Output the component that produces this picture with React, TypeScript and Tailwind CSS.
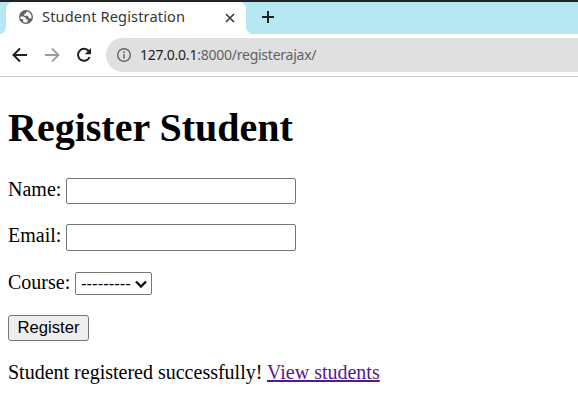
import React from "react";

function Tab() {
  return (
    <div className="flex h-8 w-[240px] shrink-0 items-center rounded-t-[7px] bg-white pl-[13px]">
      <svg className="-mt-0.5 h-[14px] w-[14px] shrink-0" viewBox="0 0 14 14">
        <circle cx="7" cy="7" r="7" fill="#5f6368" />
        <path d="M8.2 1.5 6.8 2.7v1.1H5.2v2h3.3l1.2 1.3v1.1h2.8A5.8 5.8 0 0 0 8.2 1.5z" fill="#fff" />
        <path d="M1.3 6.6h3.4l2.1 1.5v1.5h2v1.6l-1.5 1.5A5.7 5.7 0 0 1 3.6 11.6l1-1.2-1.2-1.5H1.7z" fill="#fff" />
      </svg>
      <span className="-mt-1 ml-[9px] block w-[144px] shrink-0 whitespace-nowrap text-[14.6px] leading-5 tracking-[0.12px] text-[#35363a]">Student Registration</span>
      <svg className="-mt-px ml-[39px] h-[10px] w-[10px]" viewBox="0 0 10 10" fill="none" stroke="#35363a" strokeWidth="1.6">
        <path d="m1 1 8 8M9 1 1 9" />
      </svg>
    </div>
  );
}

function Browser() {
  return (
    <header className="font-['Noto_Sans',sans-serif]">
      <div className="h-0.5 bg-[#222]" />
      <div className="flex h-8 bg-[#b5e8f3]">
        <div className="w-1.5 bg-white"><div className="h-full rounded-br-[7px] bg-[#b5e8f3]" /></div>
        <div className="bg-[#b5e8f3]"><Tab /></div>
        <div className="flex-1 bg-white">
          <div className="flex h-full items-center rounded-bl-[7px] bg-[#b5e8f3] pl-4">
            <svg className="-mt-0.5 h-3 w-3" viewBox="0 0 12 12" fill="none" stroke="#202124" strokeWidth="2"><path d="M6 0v12M0 6h12" /></svg>
          </div>
        </div>
      </div>
      <div className="flex h-[43px] items-center border-b border-[#ccc]">
        <svg className="ml-3 h-4 w-4" viewBox="0 0 16 16" fill="none" stroke="#202124" strokeWidth="2"><path d="M15 8H2M8 1.5 1.5 8 8 14.5" /></svg>
        <svg className="ml-4 h-4 w-4" viewBox="0 0 16 16" fill="none" stroke="#9b9c9e" strokeWidth="1.8"><path d="M1 8h13M8 1.5 14.5 8 8 14.5" /></svg>
        <svg className="ml-4 h-4 w-4" viewBox="0 0 16 16"><path d="M12.7 4A6 6 0 1 0 13.6 10" fill="none" stroke="#202124" strokeWidth="2" /><path d="M15 1v6.2H8.8z" fill="#202124" /></svg>
        <div className="ml-[14px] flex h-[34px] flex-1 items-center rounded-l-full bg-[#e0e0e0] pl-[11px]">
          <svg className="h-[14px] w-[14px]" viewBox="0 0 14 14" fill="none" stroke="#5f6368"><circle cx="7" cy="7" r="6.3" strokeWidth="1.4" /><path d="M7 6v4.5M7 3.3v1.6" strokeWidth="1.5" /></svg>
          <span className="ml-[9px] whitespace-nowrap text-[14px] leading-5 tracking-[-0.24px] text-[#5f6368]"><span className="text-[#202124]">127.0.0.1</span>:8000/registerajax/</span>
        </div>
      </div>
    </header>
  );
}

export default function App() {
  return (
    <div className="h-[409px] w-full overflow-hidden bg-white text-black">
      <Browser />
      <main className="pl-2 pt-7 font-['Liberation_Serif',serif] text-[20px] leading-[23px]">
        <h1 className="h-[73px] text-[40px] font-bold leading-[46px]">Register Student</h1>
        <form onSubmit={(e) => e.preventDefault()}>
          <label className="flex h-[46px] items-start">
            <span className="w-[58px]">Name:</span>
            <input className="h-[26px] w-[230px] rounded-[2px] border border-[#767676] bg-white px-1 outline-none" />
          </label>
          <label className="flex h-[47px] items-start">
            <span className="w-[58px]">Email:</span>
            <input type="email" className="h-[27px] w-[230px] rounded-[2px] border border-[#767676] bg-white px-1 outline-none" />
          </label>
          <label className="flex h-11 items-start">
            <span className="w-[67px]">Course:</span>
            <span className="mt-px flex h-[23px] w-[77px] items-center justify-between rounded-[2px] border border-[#767676] bg-white pl-[5px] pr-1 font-['Liberation_Sans',sans-serif] text-[16.67px] leading-[19px]">
              <span>---------</span>
              <svg className="h-3 w-3" viewBox="0 0 12 12" fill="none" stroke="#111" strokeWidth="2.4"><path d="m1 3.5 5 5 5-5" /></svg>
            </span>
          </label>
          <button className="block h-[26px] w-[81px] rounded-[3px] border border-[#767676] bg-[#efefef] font-['Liberation_Sans',sans-serif] text-[16.67px] leading-[22px]">Register</button>
        </form>
        <p className="mt-5">Student registered successfully! <a href="#" className="text-[#551a8b] underline decoration-2 underline-offset-1">View students</a></p>
      </main>
    </div>
  );
}
